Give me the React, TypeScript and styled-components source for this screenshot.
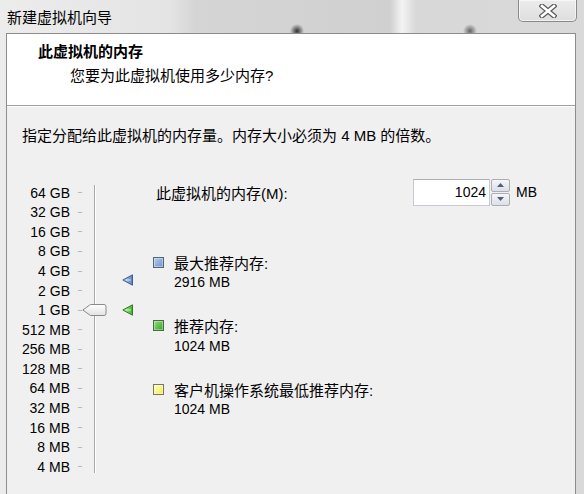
import styled, { createGlobalStyle } from 'styled-components';

const GlobalStyle = createGlobalStyle`
    html, body {
        margin: 0;
        padding: 0;
    }
    body {
        font-family: "Liberation Sans", "Noto Sans CJK SC", sans-serif;
        color: #000;
        overflow: hidden;
    }
`;

const scaleLabels = [
    '64 GB', '32 GB', '16 GB', '8 GB', '4 GB', '2 GB', '1 GB',
    '512 MB', '256 MB', '128 MB', '64 MB', '32 MB', '16 MB', '8 MB', '4 MB',
];

const ROW_H = 19.57;
const SCALE_TOP = 6;

// log2 scale: 4 MB sits on the last row, 64 GB on the first
const rowCenter = (mb: number) => {
    const index = scaleLabels.length - 1 - Math.log2(mb / 4);
    return SCALE_TOP + ROW_H / 2 + index * ROW_H;
};

const legend = [
    { color: 'blue' as const, title: '最大推荐内存:', value: '2916 MB' },
    { color: 'green' as const, title: '推荐内存:', value: '1024 MB' },
    { color: 'yellow' as const, title: '客户机操作系统最低推荐内存:', value: '1024 MB' },
];

const memory = 1024;
const maxRecommended = 2916;
const recommended = 1024;

const App = () => {
    return (
        <Page>
            <GlobalStyle />
            <TitleBar>
                <TitleText>新建虚拟机向导</TitleText>
                <CloseButton>
                    <svg width="18" height="14" viewBox="0 0 18 14">
                        <path d="M3 2 L15 12 M15 2 L3 12" stroke="#5b5b5b" strokeWidth="5" strokeLinecap="square" />
                        <path d="M3 2 L15 12 M15 2 L3 12" stroke="#ffffff" strokeWidth="2.6" strokeLinecap="square" />
                    </svg>
                </CloseButton>
            </TitleBar>
            <Client>
                <Header>
                    <HeaderTitle>此虚拟机的内存</HeaderTitle>
                    <HeaderSub>您要为此虚拟机使用多少内存?</HeaderSub>
                </Header>
                <Body>
                    <Description>指定分配给此虚拟机的内存量。内存大小必须为 4 MB 的倍数。</Description>
                    <Main>
                        <Scale>
                            <ScaleRows>
                                {scaleLabels.map((label) => (
                                    <ScaleRow key={label}>
                                        <ScaleLabel>{label}</ScaleLabel>
                                        <Tick />
                                    </ScaleRow>
                                ))}
                            </ScaleRows>
                            <Track />
                            <Thumb style={{ top: rowCenter(memory) - 6 }}>
                                <svg width="25" height="12" viewBox="0 0 25 12">
                                    <defs>
                                        <linearGradient id="thumbFill" x1="0" y1="0" x2="0" y2="1">
                                            <stop offset="0" stopColor="#ffffff" />
                                            <stop offset="1" stopColor="#e2e2e2" />
                                        </linearGradient>
                                    </defs>
                                    <path
                                        d="M0.8 6 L8.5 0.5 H22 Q24 0.5 24 2.5 V9.5 Q24 11.5 22 11.5 H8.5 Z"
                                        fill="url(#thumbFill)"
                                        stroke="#8a8a8a"
                                    />
                                </svg>
                            </Thumb>
                            <Marker style={{ top: rowCenter(maxRecommended) - 7 }}>
                                <ArrowIcon from="#c6d6ef" to="#5a7fba" line="#3f5f92" />
                            </Marker>
                            <Marker style={{ top: rowCenter(recommended) - 6 }}>
                                <ArrowIcon from="#c9f0b8" to="#3fae2b" line="#2e7d20" />
                            </Marker>
                        </Scale>
                        <Info>
                            <MemoryRow>
                                <MemoryLabel>此虚拟机的内存(M):</MemoryLabel>
                                <NumberBox>{memory}</NumberBox>
                                <Spinner>
                                    <SpinButton>
                                        <svg width="7" height="4" viewBox="0 0 7 4">
                                            <path d="M0 4 L3.5 0 L7 4 Z" fill="#4e5f80" />
                                        </svg>
                                    </SpinButton>
                                    <SpinButton>
                                        <svg width="7" height="4" viewBox="0 0 7 4">
                                            <path d="M0 0 L3.5 4 L7 0 Z" fill="#4e5f80" />
                                        </svg>
                                    </SpinButton>
                                </Spinner>
                                <Unit>MB</Unit>
                            </MemoryRow>
                            {legend.map((item) => (
                                <LegendItem key={item.color}>
                                    <LegendTitle>
                                        <Swatch $color={item.color} />
                                        {item.title}
                                    </LegendTitle>
                                    <LegendValue>{item.value}</LegendValue>
                                </LegendItem>
                            ))}
                        </Info>
                    </Main>
                </Body>
            </Client>
        </Page>
    );
};

export default App;

interface ArrowProps {
    from: string;
    to: string;
    line: string;
}

const ArrowIcon = ({ from, to, line }: ArrowProps) => {
    const id = `arrow-${to.slice(1)}`;
    return (
        <svg width="12" height="12" viewBox="0 0 12 12">
            <defs>
                <linearGradient id={id} x1="0" y1="0" x2="1" y2="0">
                    <stop offset="0" stopColor={from} />
                    <stop offset="1" stopColor={to} />
                </linearGradient>
            </defs>
            <path d="M0.8 6 L10.5 0.8 V11.2 Z" fill={`url(#${id})`} stroke={line} strokeLinejoin="round" />
            <path d="M4 6 L9 6" stroke="#ffffff" strokeOpacity="0.7" />
        </svg>
    );
};

const Page = styled.div`
    width: 584px;
    height: 494px;
    display: flex;
    flex-direction: column;
    overflow: hidden;
    background:
        radial-gradient(circle at 297px 31px, rgba(20, 20, 20, 0.85) 0, rgba(20, 20, 20, 0) 7px),
        radial-gradient(circle at 470px 31px, rgba(20, 20, 20, 0.6) 0, rgba(20, 20, 20, 0) 7px),
        linear-gradient(
            90deg,
            #ececec 0,
            #e4e4e4 170px,
            #d5d5d5 195px,
            #d0d0d0 390px,
            #f3f3f3 402px,
            #d8d8d8 416px,
            #d9d9d9 584px
        );
`;

const TitleBar = styled.div`
    height: 33px;
    flex-shrink: 0;
    display: flex;
    justify-content: space-between;
    align-items: flex-start;
    padding-left: 7px;
`;

const TitleText = styled.div`
    font-size: 15px;
    line-height: 33px;
    margin-top: 1px;
`;

const CloseButton = styled.div`
    width: 59px;
    height: 22px;
    margin-right: 7px;
    box-sizing: border-box;
    border: 1px solid #8a8a8a;
    border-top: none;
    border-radius: 0 0 5px 5px;
    background: linear-gradient(#ececec, #dedede);
    box-shadow: inset 0 0 0 1px rgba(255, 255, 255, 0.6);
    display: flex;
    align-items: center;
    justify-content: center;
`;

const Client = styled.div`
    flex: 1;
    margin: 0 8px 0 6px;
    border: 1px solid #8c8c8c;
    border-bottom: none;
    display: flex;
    flex-direction: column;
`;

const Header = styled.div`
    height: 72px;
    flex-shrink: 0;
    background: #ffffff;
    border-bottom: 1px solid #a0a0a0;
    padding-top: 9px;
    box-sizing: border-box;
`;

const HeaderTitle = styled.div`
    font-size: 15px;
    font-weight: bold;
    line-height: 18px;
    padding-left: 31px;
`;

const HeaderSub = styled.div`
    font-size: 15px;
    line-height: 20px;
    margin-top: 5px;
    padding-left: 63px;
`;

const Body = styled.div`
    flex: 1;
    background: #f0f0f0;
    padding-left: 15px;
    border-top: 1px solid #ffffff;
`;

const Description = styled.div`
    font-size: 15px;
    line-height: 18px;
    margin-top: 20px;
`;

const Main = styled.div`
    display: flex;
    margin-top: 32px;
`;

const Scale = styled.div`
    position: relative;
    width: 131px;
    flex-shrink: 0;
    display: flex;
    align-items: flex-start;
`;

const ScaleRows = styled.div`
    padding-top: ${SCALE_TOP}px;
    display: flex;
    flex-direction: column;
`;

const ScaleRow = styled.div`
    height: ${ROW_H}px;
    display: grid;
    grid-template-columns: 48px 4px;
    column-gap: 8px;
    align-items: center;
`;

const ScaleLabel = styled.span`
    font-size: 14px;
    text-align: right;
    white-space: nowrap;
`;

const Tick = styled.span`
    height: 1px;
    background: #b9b9b9;
`;

const Track = styled.div`
    width: 1px;
    height: 288px;
    margin: 8px 0 0 12px;
    border-left: 1px solid #a8a8a8;
    background: #ffffff;
`;

const Thumb = styled.div`
    position: absolute;
    left: 60px;
    height: 12px;
    display: flex;
`;

const Marker = styled.div`
    position: absolute;
    left: 100px;
    height: 12px;
    display: flex;
`;

const Info = styled.div`
    display: flex;
    flex-direction: column;
`;

const MemoryRow = styled.div`
    height: 28px;
    display: flex;
    align-items: center;
    margin-top: 1px;
`;

const MemoryLabel = styled.span`
    width: 257px;
    padding-left: 3px;
    font-size: 15px;
`;

const NumberBox = styled.div`
    width: 77px;
    height: 27px;
    box-sizing: border-box;
    background: #ffffff;
    border: 1px solid #c5cad3;
    border-top-color: #abadb3;
    font-size: 14px;
    line-height: 25px;
    text-align: right;
    padding-right: 3px;
`;

const Spinner = styled.div`
    width: 19px;
    height: 27px;
    margin-left: 1px;
    display: flex;
    flex-direction: column;
    gap: 1px;
`;

const SpinButton = styled.div`
    flex: 1;
    box-sizing: border-box;
    border: 1px solid #a9aeb8;
    border-radius: 2px;
    background: linear-gradient(#f6f6f6, #dcdfe5);
    display: flex;
    align-items: center;
    justify-content: center;
`;

const Unit = styled.span`
    font-size: 14px;
    margin-left: 6px;
`;

const LegendItem = styled.div`
    display: flex;
    flex-direction: column;
    margin-top: 22.5px;

    &:nth-child(2) {
        margin-top: 46px;
    }
`;

const LegendTitle = styled.div`
    display: flex;
    align-items: center;
    height: 20px;
    font-size: 15px;
`;

const LegendValue = styled.div`
    height: 21px;
    line-height: 21px;
    font-size: 14px;
    padding-left: 21px;
`;

const swatchColors = {
    blue: { from: '#b9cdea', to: '#6e93c8', border: '#56647a' },
    green: { from: '#8fe07a', to: '#36a524', border: '#4a6a44' },
    yellow: { from: '#fffec0', to: '#f3ea55', border: '#77775a' },
};

interface SwatchProps {
    $color: keyof typeof swatchColors;
}

const Swatch = styled.span<SwatchProps>`
    width: 11px;
    height: 11px;
    box-sizing: border-box;
    margin-right: 10px;
    border: 1px solid ${(props) => swatchColors[props.$color].border};
    background: linear-gradient(
        135deg,
        ${(props) => swatchColors[props.$color].from},
        ${(props) => swatchColors[props.$color].to}
    );
    box-shadow: inset 0 0 0 1px rgba(255, 255, 255, 0.35);
`;
